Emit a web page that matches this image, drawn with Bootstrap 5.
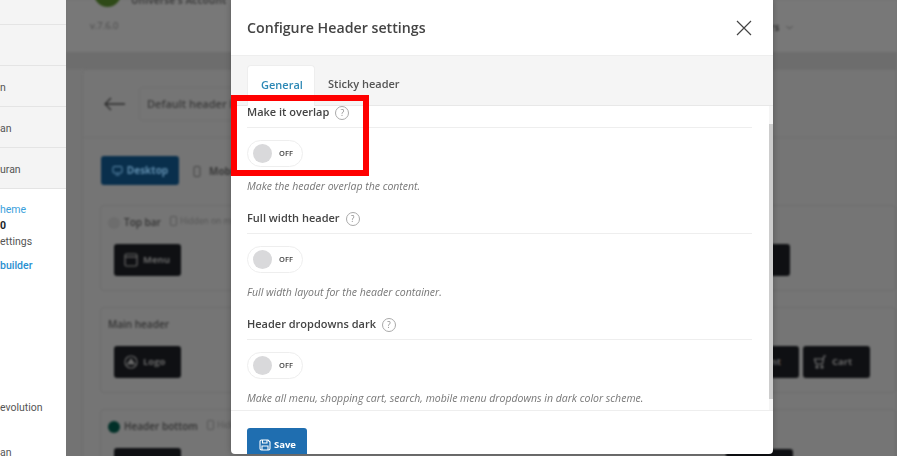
<!DOCTYPE html>
<html lang="en">
<head>
<meta charset="utf-8">
<title>Configure Header settings</title>
<link href="https://cdn.jsdelivr.net/npm/bootstrap@5.3.0/dist/css/bootstrap.min.css" rel="stylesheet">
<style>
html,body{height:456px;overflow:hidden}
body{font-family:"Open Sans","Noto Sans",sans-serif;background:#fff;position:relative}
.side-col{width:66px;flex:none;overflow:hidden;font-family:Roboto,sans-serif;font-size:10.5px;color:#555}
.side-top{background:#f4f4f4}
.side-row{height:41px;border-bottom:1px solid #e4e4e4;display:flex;align-items:center;padding-top:3px}
.side-first{height:25px;border-bottom:1px solid #e4e4e4}
.side-list{padding-top:13px}
.side-list div{height:16px;line-height:16px;white-space:nowrap}
.side-blue{color:#3a9fdc}
.side-bold{font-weight:500;color:#2a8fd0;margin-top:8px}
.gap-evo{margin-top:126px}
.gap-an{margin-top:29px}
.back-col{flex:1;background:#737373;overflow:hidden;position:relative}
.back-blur{filter:blur(.8px);height:456px;width:831px}
.bk-top{height:52px;background:#787878;padding:0 0 0 24px}
.bk-logo{width:27px;height:27px;border-radius:50%;background:#2f4a18;margin:-20px 0 0 4px;flex:none}
.bk-ver{font-size:9.5px;color:#4c4c4c;margin-top:11px}
.bk-brand{font-size:10px;color:#444;margin-top:-7px;font-weight:700;white-space:nowrap;margin-left:10px}
.bk-band{height:17px;background:#6d6d6d}
.bk-card{margin-left:16px;background:#757575;border:1px solid #6e6e6e;border-radius:4px 0 0 0}
.bk-title{height:68px;border-bottom:1px solid #6f6f6f;padding-left:21px}
.bk-input{width:240px;height:34px;border:1px solid #6f6f6f;border-radius:3px;margin-left:13px;font-size:11px;font-weight:600;color:#3c3c3c;padding:8px 7px;white-space:nowrap}
.bk-tabs{padding:18px 0 0 18px;height:67px}
.bk-desk{width:78px;height:29px;background:#092f4c;color:#5f8cac;font-size:10px;font-weight:700;border-radius:3px}
.bk-mob{font-size:10px;font-weight:700;color:#3a3a3a;margin-left:14px}
.bk-panel{margin:0 0 16px 17px;border:1px solid #6d6d6d;border-radius:4px;height:86px;padding:8.5px 0 0 7px}
.bk-ptitle{height:29.5px;font-size:10px;font-weight:600;color:#333}
.bk-note{font-size:8.5px;font-weight:400;color:#555;margin-left:9px;display:flex;gap:3px;align-items:center}
.bk-dot{width:12px;height:12px;border-radius:50%;background:#013028;margin:2px 4px 0 0}
.bk-dot2{width:12px;height:12px;border-radius:50%;background:#6d6d6d;margin:2px 4px 0 0}
.bk-chip{width:67px;height:32px;background:#0f1013;border-radius:3px;color:#686868;font-size:9.5px;font-weight:700;gap:5px;padding-left:10px;margin-left:6px;flex:none}
.bk-right{position:absolute;display:flex;gap:4px}
.bk-right .bk-chip{margin-left:0}
.bk-r1{left:657px;top:244px}
.bk-r2{left:666px;top:346px}
.bk-r3{left:660px;top:449px}
.bk-chev{position:absolute;left:704px;top:20px;font-size:10px;font-weight:700;color:#3c3c3c;display:flex;align-items:center;gap:6px}
.cfg-modal{position:absolute;left:231px;top:0;width:542px;height:454px;background:#fff;border-radius:0 0 4px 4px;overflow:hidden;display:flex;flex-direction:column;box-shadow:0 0 6px rgba(0,0,0,.25)}
.cfg-head{height:56px;flex:none;border-bottom:1px solid #eee;padding:0 21px 0 16px}
.cfg-title{font-size:14.2px;font-weight:600;color:#444;margin:0}
.cfg-tabs{height:50px;flex:none;background:#f5f5f5;border-bottom:1px solid #e8e8e8;padding:9px 0 0 16px}
.cfg-tab{height:41px;font-size:11px;font-weight:600;color:#555;padding:11px 13px 0;white-space:nowrap;margin-bottom:-1px}
.cfg-on{width:68px;background:#fff;border:1px solid #eee;border-bottom:0;color:#2d88b5;border-radius:4px 4px 0 0}
.cfg-body{flex:1;min-height:0;display:flex}
.cfg-scroll{width:538px;padding:0 17px 0 16px}
.cfg-bar{width:4px;background:#f5f5f5;padding-top:18px;height:305px}
.cfg-bar div{background:#cdcdcd;height:275px}
.cfg-sec{height:106px}
.cfg-lab{height:22px;border-bottom:1px solid #eee;font-size:11px;font-weight:600;color:#444;gap:6px;align-items:flex-start;line-height:12px}
.cfg-q{width:14px;height:14px;border:1px solid #aaa;border-radius:50%;font-size:8.5px;color:#888;line-height:12px;text-align:center;font-weight:400;flex:none}
.cfg-toggle{width:56px;height:27px;border:1px solid #eee;border-radius:14px;margin-top:12px;padding-left:5px;gap:7px;font-size:7.5px;font-weight:600;color:#444}
.cfg-knob{width:19px;height:19px;border-radius:50%;background:#d9d9db}
.cfg-help{font-size:10.5px;font-style:italic;color:#777;margin-top:12px;white-space:nowrap}
.cfg-foot{height:44px;flex:none;border-top:1px solid #eee;padding:17px 0 0 16px}
.cfg-save{width:60px;height:34px;background:#1f6eb0;color:#fff;font-size:9.5px;font-weight:700;border-radius:3px;gap:3px;padding-left:12px}
.red-box{position:absolute;left:231px;top:95px;width:138px;height:81px;border:6px solid #f00;pointer-events:none}
</style>
</head>
<body>
<div class="d-flex">
  <div class="side-col">
    <div class="side-top">
      <div class="side-first"></div>
      <div class="side-row"></div>
      <div class="side-row">n</div>
      <div class="side-row">an</div>
      <div class="side-row">uran</div>
    </div>
    <div class="side-list">
      <div class="side-blue">heme</div>
      <div class="fw-bold text-dark">0</div>
      <div>ettings</div>
      <div class="side-bold">builder</div>
      <div class="gap-evo">evolution</div>
      <div class="gap-an">an</div>
    </div>
  </div>
  <div class="back-col">
    <div class="back-blur">
      <div class="bk-top">
        <div class="d-flex"><div class="bk-logo"></div><div class="bk-brand">Universe's Account</div></div>
        <div class="bk-ver">v.7.6.0</div>
      </div>
      <div class="bk-band"></div>
      <div class="bk-card">
        <div class="bk-title d-flex align-items-center">
          <svg width="22" height="14" viewBox="0 0 22 14" fill="none" stroke="#2b2b2b" stroke-width="1.3"><path d="M1 7H21M7 1 1 7l6 6"/></svg>
          <div class="bk-input">Default header layout</div>
        </div>
        <div class="bk-tabs d-flex align-items-start">
          <div class="bk-desk d-flex align-items-center justify-content-center gap-1">
            <svg width="11" height="11" viewBox="0 0 11 11" fill="none" stroke="#5f8cac"><rect x="1" y="1.5" width="9" height="6.5" rx="1"/><path d="M3.5 10h4"/></svg>Desktop
          </div>
          <div class="bk-mob d-flex align-items-center gap-2 pt-2">
            <svg width="8" height="11" viewBox="0 0 8 11" fill="none" stroke="#444"><rect x="1" y=".5" width="6" height="10" rx="1"/></svg>Mobile
          </div>
        </div>
        <div class="bk-panel">
          <div class="bk-ptitle d-flex align-items-start"><span class="bk-dot2"></span>Top bar<span class="bk-note"><svg width="7" height="10" viewBox="0 0 7 10" fill="none" stroke="#555"><rect x=".5" y=".5" width="6" height="9" rx="1"/></svg>Hidden on mobile</span></div>
          <div class="bk-chip d-flex align-items-center"><svg width="14" height="14" viewBox="0 0 14 14" fill="none" stroke="#686868" stroke-width="1.2"><rect x="1" y="1" width="12" height="12" rx="1.5"/><path d="M1 4h12"/></svg>Menu</div>
        </div>
        <div class="bk-panel">
          <div class="bk-ptitle">Main header</div>
          <div class="bk-chip d-flex align-items-center"><svg width="14" height="14" viewBox="0 0 14 14" fill="none" stroke="#686868" stroke-width="1.2"><circle cx="7" cy="7" r="6"/><path d="M3.5 9 7 4l3.5 5z" fill="#686868"/></svg>Logo</div>
        </div>
        <div class="bk-panel">
          <div class="bk-ptitle d-flex align-items-start"><span class="bk-dot"></span>Header bottom<span class="bk-note"><svg width="7" height="10" viewBox="0 0 7 10" fill="none" stroke="#555"><rect x=".5" y=".5" width="6" height="9" rx="1"/></svg>Hidden on mobile</span></div>
          <div class="bk-chip"></div>
        </div>
      </div>
      <div class="bk-right bk-r1"><div class="bk-chip d-flex align-items-center">Menu</div></div>
      <div class="bk-right bk-r2">
        <div class="bk-chip d-flex align-items-center">Account</div>
        <div class="bk-chip d-flex align-items-center"><svg width="14" height="14" viewBox="0 0 14 14" fill="none" stroke="#7a7a7a" stroke-width="1.1"><path d="M13 1h-2l-1.5 8H3L1.5 4h8.5"/><circle cx="4" cy="12" r="1"/><circle cx="9" cy="12" r="1"/></svg>Cart</div>
      </div>
      <div class="bk-right bk-r3"><div class="bk-chip"></div></div>
      <div class="bk-chev">rs <svg width="7" height="5" viewBox="0 0 7 5" fill="none" stroke="#4a4a4a"><path d="M.5 1 3.5 4l3-3"/></svg></div>
    </div>
  </div>
</div>

<div class="cfg-modal">
  <div class="cfg-head d-flex align-items-center justify-content-between">
    <h5 class="cfg-title">Configure Header settings</h5>
    <svg width="16" height="16" viewBox="0 0 16 16" fill="none" stroke="#444" stroke-width="1.2"><path d="M1 1l14 14M15 1 1 15"/></svg>
  </div>
  <div class="cfg-tabs d-flex">
    <div class="cfg-tab cfg-on">General</div>
    <div class="cfg-tab">Sticky header</div>
  </div>
  <div class="cfg-body">
    <div class="cfg-scroll">
      <div class="cfg-sec">
        <div class="cfg-lab d-flex">Make it overlap <span class="cfg-q">?</span></div>
        <div class="cfg-toggle d-flex align-items-center"><span class="cfg-knob"></span>OFF</div>
        <div class="cfg-help">Make the header overlap the content.</div>
      </div>
      <div class="cfg-sec">
        <div class="cfg-lab d-flex">Full width header <span class="cfg-q">?</span></div>
        <div class="cfg-toggle d-flex align-items-center"><span class="cfg-knob"></span>OFF</div>
        <div class="cfg-help">Full width layout for the header container.</div>
      </div>
      <div class="cfg-sec">
        <div class="cfg-lab d-flex">Header dropdowns dark <span class="cfg-q">?</span></div>
        <div class="cfg-toggle d-flex align-items-center"><span class="cfg-knob"></span>OFF</div>
        <div class="cfg-help">Make all menu, shopping cart, search, mobile menu dropdowns in dark color scheme.</div>
      </div>
    </div>
    <div class="cfg-bar"><div></div></div>
  </div>
  <div class="cfg-foot">
    <div class="cfg-save d-flex align-items-center">
      <svg width="12" height="12" viewBox="0 0 12 12" fill="none" stroke="#fff" stroke-width="1.1"><path d="M1 2.5A1.500 1.500 0 0 1 2.5 1H9l2 2v6.500A1.500 1.500 0 0 1 9.500 11h-7A1.500 1.500 0 0 1 1 9.500z"/><path d="M3.500 1v3h4.500V1M3 11V7h6v4"/></svg>Save
    </div>
  </div>
</div>
<div class="red-box"></div>
<script src="https://cdn.jsdelivr.net/npm/bootstrap@5.3.0/dist/js/bootstrap.bundle.min.js"></script>
</body>
</html>
